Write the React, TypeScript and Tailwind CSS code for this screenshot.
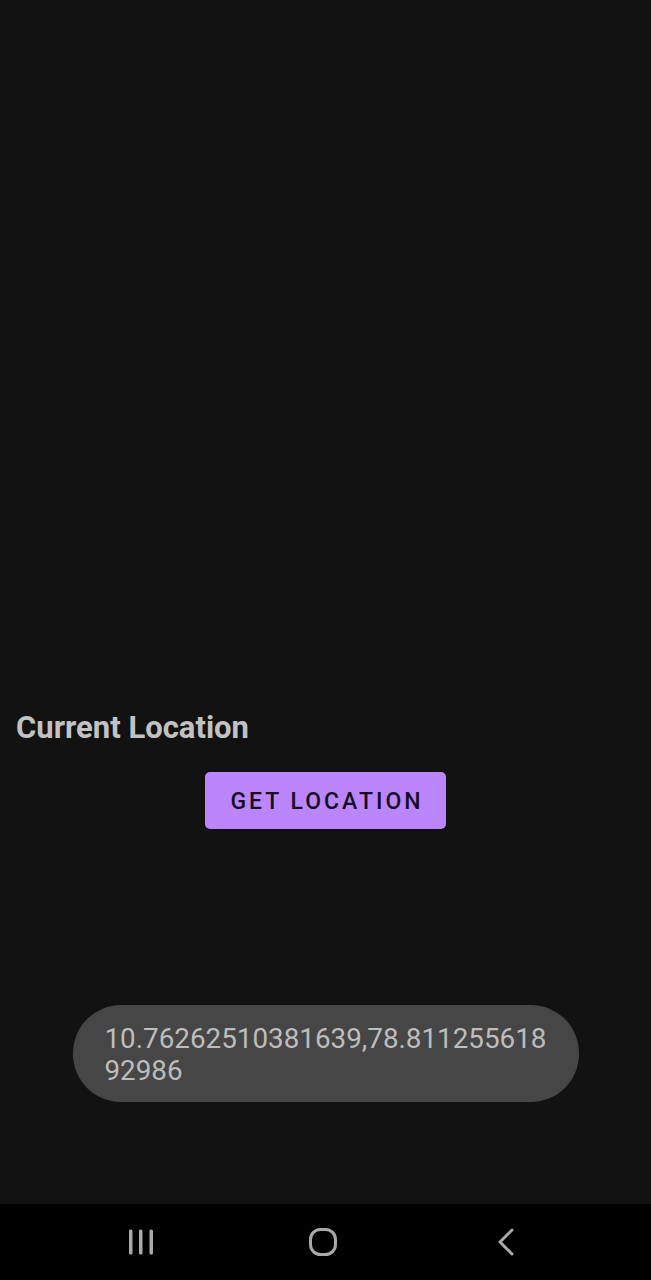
export default function App() {
  return (
    <div className="flex h-[1280px] w-[651px] flex-col bg-[#121212] font-['Roboto',sans-serif]">
      <main className="flex h-[1204px] flex-col pt-[709px]">
        <h1 className="pl-4 text-[31px] font-bold leading-[37px] text-[#c2c2c2]">
          Current Location
        </h1>

        <div className="mt-[26px] flex justify-center">
          <button className="flex h-[57px] w-[241px] items-center justify-center rounded-[5px] bg-[#bb86fc] pl-[3px] pt-[3px] text-[23px] font-medium tracking-[3px] text-[#170d24]">
            GET LOCATION
          </button>
        </div>

        <div className="mt-[176px] flex justify-center">
          <div className="h-[97px] w-[506px] rounded-[48px] bg-[#464646] pl-8 pr-[28px] pt-[18px]">
            <p className="break-all text-[27.8px] leading-[32px] text-[#bdbdbd]">
              10.76262510381639,78.81125561892986
            </p>
          </div>
        </div>
      </main>

      <nav className="flex h-[76px] items-center bg-black pl-[129px]">
        <svg width="24" height="26" viewBox="0 0 24 26" className="text-[#a9a9a9]">
          <rect x="0" y="0.5" width="3.5" height="25" rx="1.5" fill="currentColor" />
          <rect x="10" y="0.5" width="3.5" height="25" rx="1.5" fill="currentColor" />
          <rect x="20.5" y="0.5" width="3.5" height="25" rx="1.5" fill="currentColor" />
        </svg>
        <svg width="28" height="28" viewBox="0 0 28 28" className="ml-[156px] text-[#a9a9a9]">
          <rect x="1.5" y="1.5" width="25" height="25" rx="10" fill="none" stroke="currentColor" strokeWidth="3" />
        </svg>
        <svg width="16" height="28" viewBox="0 0 16 28" className="ml-[161px] text-[#a9a9a9]">
          <path d="M14 2 L2 14 L14 26" fill="none" stroke="currentColor" strokeWidth="3" strokeLinecap="round" strokeLinejoin="round" />
        </svg>
      </nav>
    </div>
  );
}
